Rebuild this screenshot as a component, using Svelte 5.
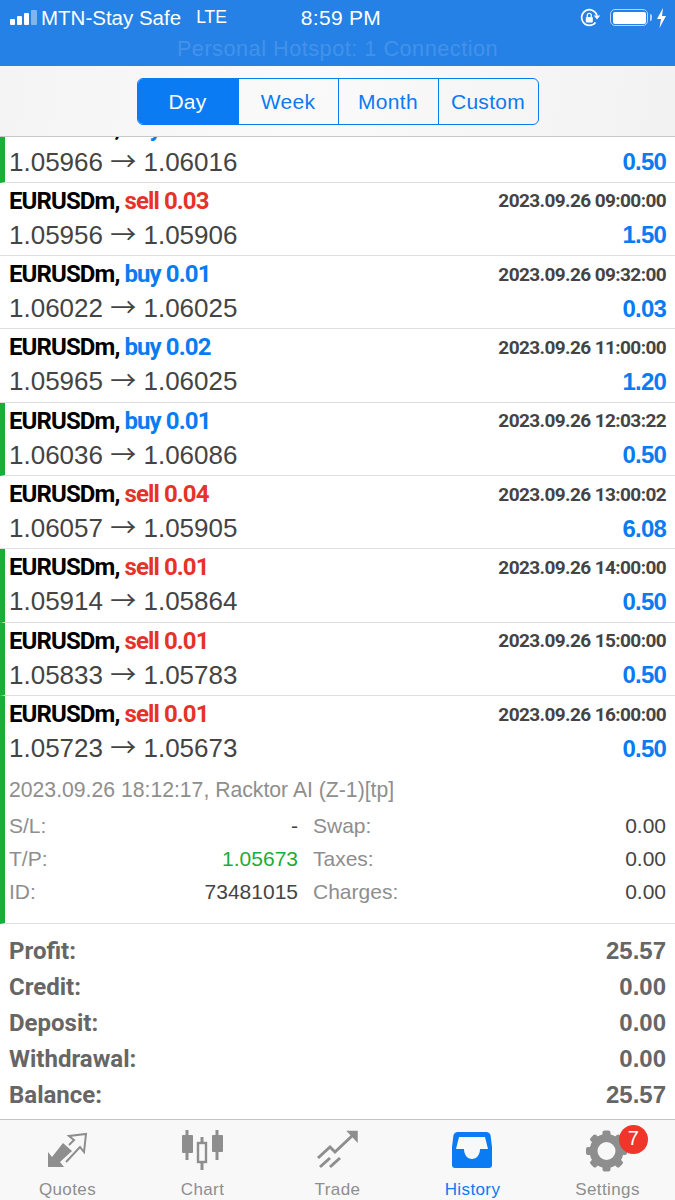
<script>
  let tabs = ["Day", "Week", "Month", "Custom"];

  let deals = [
    { side: "buy", vol: "0.01", time: "2023.09.26 08:00:00", from: "1.05966", to: "1.06016", profit: "0.50", mark: true },
    { side: "sell", vol: "0.03", time: "2023.09.26 09:00:00", from: "1.05956", to: "1.05906", profit: "1.50", mark: false },
    { side: "buy", vol: "0.01", time: "2023.09.26 09:32:00", from: "1.06022", to: "1.06025", profit: "0.03", mark: false },
    { side: "buy", vol: "0.02", time: "2023.09.26 11:00:00", from: "1.05965", to: "1.06025", profit: "1.20", mark: false },
    { side: "buy", vol: "0.01", time: "2023.09.26 12:03:22", from: "1.06036", to: "1.06086", profit: "0.50", mark: true },
    { side: "sell", vol: "0.04", time: "2023.09.26 13:00:02", from: "1.06057", to: "1.05905", profit: "6.08", mark: false },
    { side: "sell", vol: "0.01", time: "2023.09.26 14:00:00", from: "1.05914", to: "1.05864", profit: "0.50", mark: true },
    { side: "sell", vol: "0.01", time: "2023.09.26 15:00:00", from: "1.05833", to: "1.05783", profit: "0.50", mark: true }
  ];

  let summary = [
    ["Profit:", "25.57"],
    ["Credit:", "0.00"],
    ["Deposit:", "0.00"],
    ["Withdrawal:", "0.00"],
    ["Balance:", "25.57"]
  ];
</script>

{#snippet dealRow(d)}
  <div class="line">
    <span class="sym">EURUSDm, <span class={d.side}>{d.side} {d.vol}</span></span>
    <span class="time">{d.time}</span>
  </div>
  <div class="line second">
    <span class="prices">{d.from} <span class="arrow">→</span> {d.to}</span>
    <span class="profit">{d.profit}</span>
  </div>
{/snippet}

<main class="screen">
  <header class="status">
    <div class="status-top">
      <div class="left">
        <span class="bars"><i></i><i></i><i></i><i class="off"></i></span>
        <span>MTN-Stay Safe</span>
        <span class="lte">LTE</span>
      </div>
      <div class="clock">8:59 PM</div>
      <div class="right">
        <svg class="lock" width="20" height="20" viewBox="0 0 20 20" fill="none" stroke="#fff" stroke-width="1.7">
          <path d="M15.500 14.500A7.800 7.800 0 1 1 17 7.500" />
          <path d="M13.800 7.500h6.400l-3.200 4z" fill="#fff" stroke="none" />
          <rect x="5.800" y="9" width="7" height="5.500" rx="1" fill="#fff" stroke="none" />
          <path d="M7.300 9V7.400a2 2 0 0 1 4 0V9" stroke-width="1.200" />
        </svg>
        <span class="battery"><b></b></span>
        <svg width="11" height="20" viewBox="0 0 11 20"><path d="M7 0 1 11h4L3.500 20 10 8H6z" fill="#fff" /></svg>
      </div>
    </div>
    <div class="hotspot">Personal Hotspot: 1 Connection</div>
  </header>

  <section class="periods">
    <div class="segments">
      {#each tabs as t, i}
        <button class:active={i === 0}>{t}</button>
      {/each}
    </div>
  </section>

  <section class="list">
    <div class="clip">
      {#each deals as d, i}
        <article class="row" class:mark={d.mark} class:first={i === 0}>
          {@render dealRow(d)}
        </article>
      {/each}

      <article class="row open mark">
        {@render dealRow({ side: "sell", vol: "0.01", time: "2023.09.26 16:00:00", from: "1.05723", to: "1.05673", profit: "0.50" })}
        <div class="comment">2023.09.26 18:12:17, Racktor AI (Z-1)[tp]</div>
        <div class="details">
          <span class="k">S/L:</span><span class="v">-</span><span class="k">Swap:</span><span class="v">0.00</span>
          <span class="k">T/P:</span><span class="v tp">1.05673</span><span class="k">Taxes:</span><span class="v">0.00</span>
          <span class="k">ID:</span><span class="v">73481015</span><span class="k">Charges:</span><span class="v">0.00</span>
        </div>
      </article>
    </div>

    <div class="summary">
      {#each summary as s}
        <div class="sum-row"><span class="label">{s[0]}</span><span>{s[1]}</span></div>
      {/each}
    </div>
  </section>

  <nav class="tabbar">
    <div class="tab">
      <svg width="55" height="50" viewBox="0 0 55 50">
        <path d="M8 27l4 5 11-14 9 8-12 11 4 5H8z" fill="#8e8e8e" />
        <path d="M29 20l5-5-5-4 17-2-2 18-4-5-14 15" fill="none" stroke="#8e8e8e" stroke-width="2" />
      </svg>
      <span>Quotes</span>
    </div>
    <div class="tab">
      <svg width="55" height="50" viewBox="0 0 55 50" fill="#8e8e8e">
        <rect x="10.500" y="5" width="3" height="30" />
        <rect x="7" y="10" width="11" height="18" rx="1" />
        <rect x="25.500" y="12" width="3" height="33" />
        <rect x="23" y="18" width="8" height="19" fill="#f8f8f8" stroke="#8e8e8e" stroke-width="2.400" />
        <rect x="40.500" y="5" width="3" height="30" />
        <rect x="37" y="10" width="11" height="17" rx="1" />
      </svg>
      <span>Chart</span>
    </div>
    <div class="tab">
      <svg width="55" height="50" viewBox="0 0 55 50" fill="none" stroke="#8e8e8e" stroke-width="3">
        <path d="M8 33l12-11 5 5 18-17" />
        <path d="M38 6.500h9V16z" fill="#8e8e8e" stroke-width="1.500" />
        <path d="M10 42l10-9" />
        <path d="M20 42l10-9" />
      </svg>
      <span>Trade</span>
    </div>
    <div class="tab on">
      <svg width="55" height="50" viewBox="0 0 55 50">
        <path d="M12 7h30a4 4 0 0 1 3.500 3L47 22v18a3 3 0 0 1-3 3H10a3 3 0 0 1-3-3V22l1.500-12A4 4 0 0 1 12 7z" fill="#0a7bf2" />
        <path d="M14 12h26l3 12h-8c0 6-3.500 10-8 10s-8-4-8-10h-8z" fill="#f8f8f8" />
      </svg>
      <span>History</span>
    </div>
    <div class="tab">
      <span class="gear">
        <svg width="55" height="50" viewBox="0 0 55 50">
          <circle cx="26.500" cy="26" r="13" fill="none" stroke="#8e8e8e" stroke-width="8" />
          <g fill="#8e8e8e">
            {#each [0, 45, 90, 135, 180, 225, 270, 315] as a}
              <rect x="22.500" y="5.500" width="8" height="8" rx="2" transform="rotate({a} 26.500 26)" />
            {/each}
          </g>
        </svg>
        <em class="badge">7</em>
      </span>
      <span>Settings</span>
    </div>
  </nav>
</main>

<style>
  :global(body) {
    margin: 0;
    background: #fff;
  }

  .screen {
    width: 675px;
    height: 1200px;
    display: flex;
    flex-direction: column;
    overflow: hidden;
    font-family: "Liberation Sans", Arial, sans-serif;
    color: #444;
  }

  /* Status bar */
  .status {
    height: 66px;
    flex: none;
    box-sizing: border-box;
    background: #2681e6;
    color: #fff;
    padding-top: 5px;
  }

  .status-top {
    height: 25px;
    padding: 0 8px 0 10px;
    display: grid;
    grid-template-columns: 1fr auto 1fr;
    align-items: center;
    font-size: 20.500px;
  }

  .left {
    display: flex;
    align-items: center;
    gap: 4px;
  }

  .lte {
    margin-left: 11px;
    font-size: 17.500px;
  }

  .bars {
    display: flex;
    align-items: flex-end;
    gap: 2px;
    height: 15px;
  }

  .bars i {
    width: 5px;
    background: #fff;
    border-radius: 1px;
  }

  .bars i:nth-child(1) { height: 6px; }
  .bars i:nth-child(2) { height: 9px; }
  .bars i:nth-child(3) { height: 12px; }
  .bars i:nth-child(4) { height: 15px; width: 6px; }
  .bars i.off { background: #7fb4ef; }

  .clock {
    font-size: 21px;
    letter-spacing: 0.300px;
    margin-left: 5px;
  }

  .right {
    display: flex;
    justify-content: flex-end;
    align-items: center;
    gap: 9px;
  }

  .lock {
    margin-right: 1px;
  }

  .battery {
    position: relative;
    width: 38px;
    height: 17px;
    box-sizing: border-box;
    border: 1.500px solid #b4d4f8;
    border-radius: 5px;
    padding: 1.500px;
    margin-right: -1px;
  }

  .battery::after {
    content: "";
    position: absolute;
    right: -5px;
    top: 3.500px;
    width: 2px;
    height: 7px;
    background: #b4d4f8;
    border-radius: 0 2px 2px 0;
  }

  .battery b {
    display: block;
    height: 100%;
    background: #fff;
    border-radius: 2px;
  }

  .hotspot {
    text-align: center;
    font-size: 21.700px;
    color: #4392ea;
    margin-top: 6px;
    letter-spacing: 0.500px;
  }

  /* Day / Week / Month / Custom */
  .periods {
    height: 71px;
    flex: none;
    box-sizing: border-box;
    background: linear-gradient(100deg, #f4f4f4, #fafafa 45%, #f2f2f2);
    border-bottom: 1px solid #c9c9c9;
    display: flex;
    justify-content: center;
    padding-top: 12px;
  }

  .segments {
    display: flex;
    height: 47px;
    box-sizing: border-box;
    border: 1px solid #0a7bf2;
    border-radius: 6px;
    overflow: hidden;
  }

  .segments button {
    width: 100px;
    padding: 0;
    background: none;
    border: 0;
    border-left: 1px solid #0a7bf2;
    color: #0a7bf2;
    font: inherit;
    font-size: 21px;
    letter-spacing: 0.300px;
  }

  .segments button:first-child {
    border-left: 0;
  }

  .segments button.active {
    background: #0a7bf2;
    color: #fff;
  }

  /* History list */
  .list {
    flex: 1;
    min-height: 0;
    display: flex;
    flex-direction: column;
    overflow: hidden;
  }

  .clip {
    display: flex;
    flex-direction: column;
  }

  .row {
    height: 73.330px;
    flex: none;
    box-sizing: border-box;
    padding: 3px 9px 0 9px;
    border-bottom: 1px solid #dedede;
  }

  .row.first {
    margin-top: -27.500px;
  }

  .row.mark {
    border-left: 5px solid #18ae37;
    padding-left: 4px;
  }

  .row.open {
    height: 228px;
  }

  .line {
    display: flex;
    justify-content: space-between;
    align-items: center;
    height: 30px;
  }

  .line.second {
    height: 38px;
    padding-top: 1px;
    box-sizing: border-box;
  }

  .sym {
    font-family: Roboto, "Liberation Sans", sans-serif;
    font-size: 24px;
    font-weight: 700;
    color: #000;
    letter-spacing: -0.900px;
  }

  .buy { color: #0a7bf2; }
  .sell { color: #e6332a; }

  .time {
    font-family: Roboto, "Liberation Sans", sans-serif;
    font-size: 19px;
    font-weight: 700;
    color: #444;
    letter-spacing: -0.600px;
  }

  .prices {
    font-size: 26px;
    color: #444;
  }

  .arrow {
    font-family: "Noto Sans CJK JP", sans-serif;
    font-size: 26px;
    line-height: 1;
  }

  .profit {
    font-size: 24px;
    font-weight: 700;
    color: #0a7bf2;
    letter-spacing: -0.800px;
  }

  .comment {
    margin-top: 11px;
    font-size: 21.200px;
    color: #8e8e8e;
  }

  .details {
    margin-top: 7px;
    display: grid;
    grid-template-columns: 140px 149px 1fr 80px;
    grid-auto-rows: 33px;
    align-items: center;
    font-size: 21px;
  }

  .k {
    color: #8e8e8e;
  }

  .details .k:nth-child(4n + 3) {
    padding-left: 15px;
  }

  .v {
    text-align: right;
    color: #444;
  }

  .tp {
    color: #18ae37;
  }

  /* Totals */
  .summary {
    padding: 9px 9px 0;
    display: flex;
    flex-direction: column;
  }

  .sum-row {
    height: 36px;
    display: flex;
    justify-content: space-between;
    align-items: center;
    font-size: 24px;
    font-weight: 700;
    color: #666;
  }

  .label {
    font-family: Roboto, "Liberation Sans", sans-serif;
  }

  /* Bottom tabs */
  .tabbar {
    height: 81px;
    flex: none;
    box-sizing: border-box;
    background: #f8f8f8;
    border-top: 1px solid #c4c4c4;
    display: grid;
    grid-template-columns: repeat(5, 1fr);
  }

  .tab {
    display: flex;
    flex-direction: column;
    align-items: center;
    padding-top: 5px;
    font-size: 17px;
    color: #8e8e8e;
    letter-spacing: 0.400px;
    gap: 5px;
  }

  .tab svg {
    display: block;
  }

  .tab.on {
    color: #0a7bf2;
  }

  .gear {
    position: relative;
    display: block;
    height: 50px;
  }

  .badge {
    position: absolute;
    top: 0;
    left: 39px;
    width: 29px;
    height: 29px;
    border-radius: 50%;
    background: #f0352b;
    color: #fff;
    font-style: normal;
    font-size: 20px;
    line-height: 27px;
    text-align: center;
  }
</style>
